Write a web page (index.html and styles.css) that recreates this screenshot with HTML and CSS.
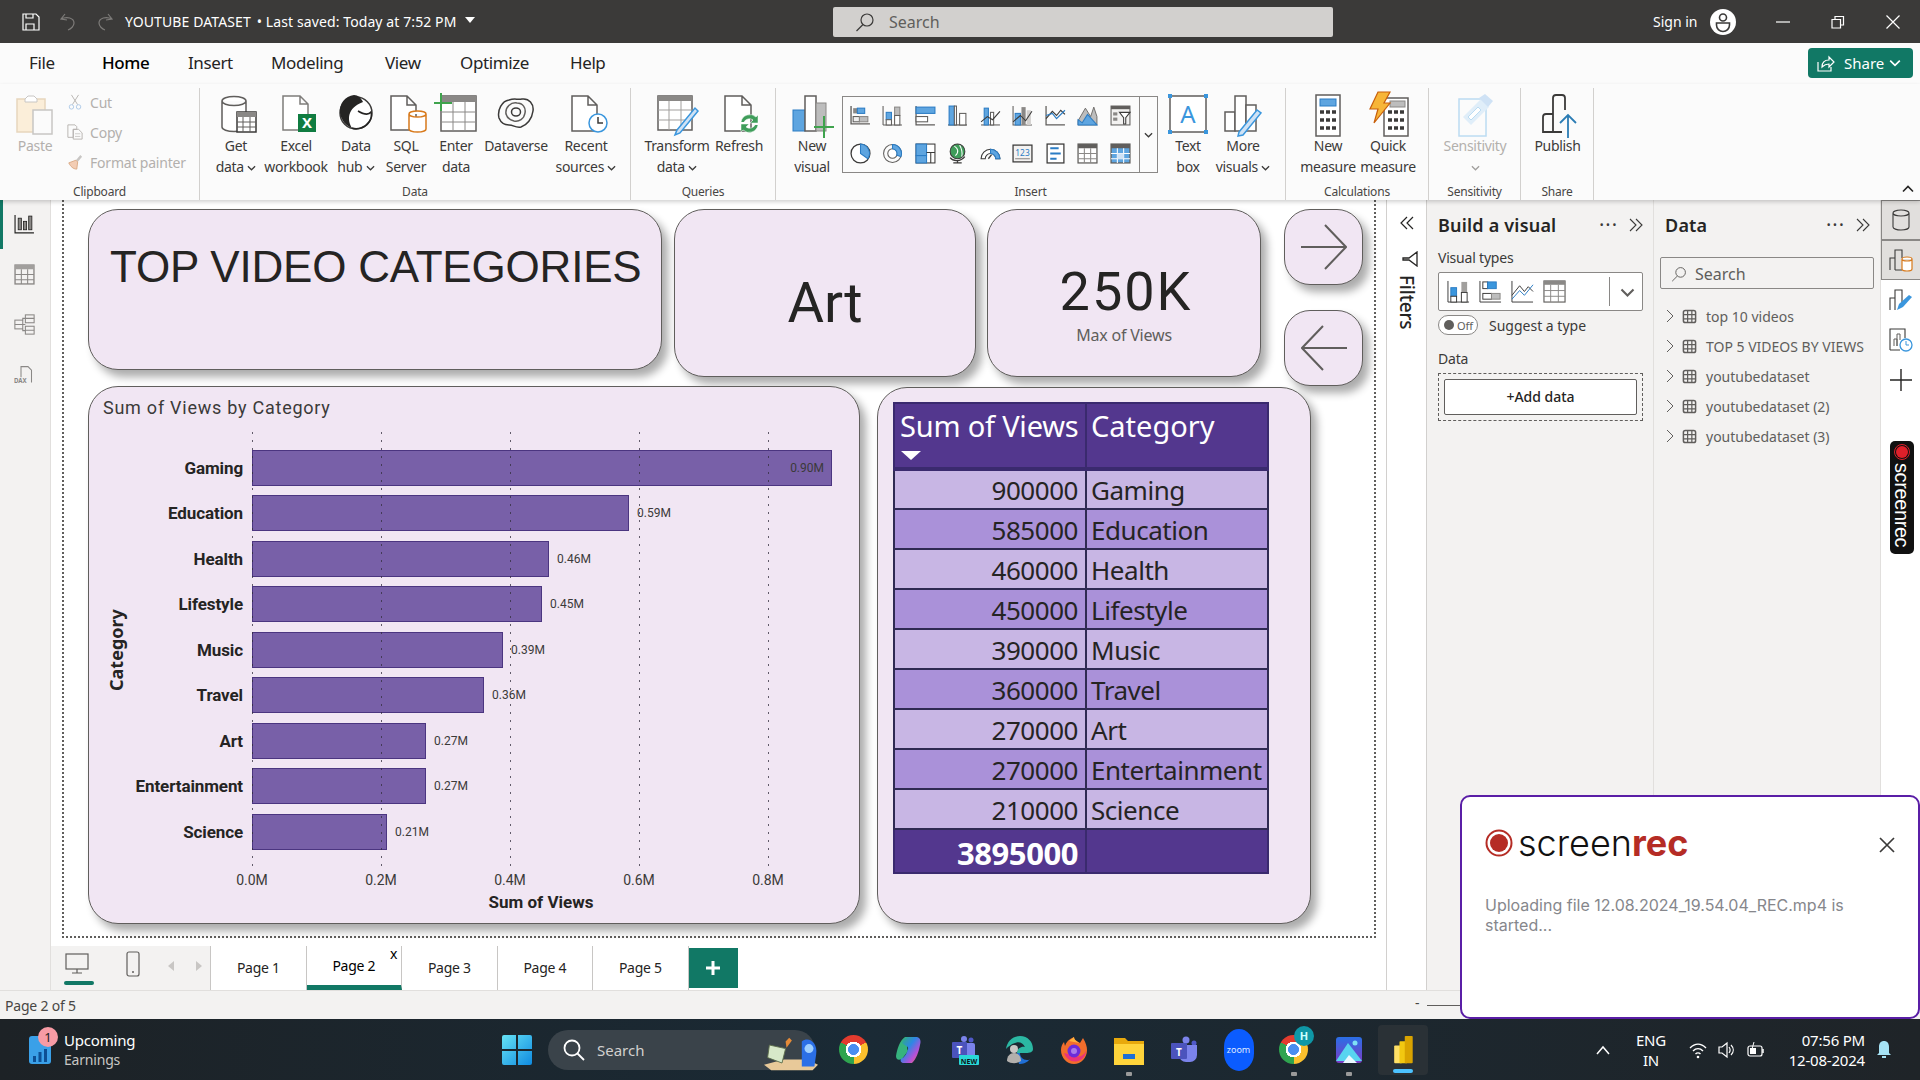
FILE: index.html
```html
<!DOCTYPE html>
<html lang="en">
<head>
<meta charset="utf-8">
<title>YOUTUBE DATASET - Power BI Desktop</title>
<link rel="stylesheet" href="styles.css">
</head>
<body>
<svg class="sprite" aria-hidden="true">
  <symbol id="chev" viewBox="0 0 10 6"><path d="M1 1l4 4 4-4" fill="none" stroke="currentColor" stroke-width="1.4"/></symbol>
  <symbol id="gridtbl" viewBox="0 0 16 16"><rect x="1.5" y="1.5" width="13" height="13" rx="2" fill="none" stroke="#605e5c" stroke-width="1.6"/><path d="M1.5 6h13M1.5 10.500h13M6 1.500v13M10.500 1.500v13" stroke="#605e5c" stroke-width="1.300"/></symbol>
  <symbol id="chevr" viewBox="0 0 8 14"><path d="M1 1l6 6-6 6" fill="none" stroke="#605e5c" stroke-width="1"/></symbol>
  <symbol id="dbl" viewBox="0 0 16 14"><path d="M2 1l6 6-6 6M8 1l6 6-6 6" fill="none" stroke="#3b3a39" stroke-width="1.100"/></symbol>
</svg>

<div class="app">
  <header class="titlebar">
    <div class="tb-left">
      <svg class="ic18" viewBox="0 0 18 18"><path d="M1 1h13l3 3v13H1z M4 17v-6h8v6 M4 1v4h7V1" fill="none" stroke="#fff" stroke-width="1.200"/></svg>
      <svg class="ic18 undo" viewBox="0 0 18 18"><path d="M6 1L2 6l6 1 M2 6c6-3 13-1 13 4 0 3-3 6-6 7" fill="none" stroke="#7d7b79" stroke-width="1.200"/></svg>
      <svg class="ic18 redo" viewBox="0 0 18 18"><path d="M12 1l4 5-6 1 M16 6c-6-3-13-1-13 4 0 3 3 6 6 7" fill="none" stroke="#7d7b79" stroke-width="1.200"/></svg>
      <span class="doc">YOUTUBE DATASET</span><span class="saved">• Last saved: Today at 7:52 PM</span><span class="caret"></span>
    </div>
    <div class="tb-search">
      <svg class="ic20" viewBox="0 0 20 20"><circle cx="12" cy="8" r="6" fill="none" stroke="#3b3a39" stroke-width="1.200"/><path d="M8 12.500L1.500 19" stroke="#3b3a39" stroke-width="1.200"/></svg>
      <span>Search</span>
    </div>
    <div class="tb-right">
      <span class="signin">Sign in</span>
      <svg class="avatar" viewBox="0 0 26 26"><circle cx="13" cy="13" r="13" fill="#fff"/><circle cx="13" cy="8.500" r="3.500" fill="none" stroke="#3b3a39" stroke-width="1.600"/><path d="M6.500 14h13v2a6 6 0 0 1-13 0z" fill="none" stroke="#3b3a39" stroke-width="1.600"/></svg>
      <svg class="winbtn" viewBox="0 0 14 14"><path d="M0 7h14" stroke="#fff" stroke-width="1.200"/></svg>
      <svg class="winbtn" viewBox="0 0 14 14"><path d="M1 4.500h8.500v8.500H1z M4 4V1.500h8.500V10H10" fill="none" stroke="#fff" stroke-width="1.200"/></svg>
      <svg class="winbtn" viewBox="0 0 14 14"><path d="M0.500 0.500l13 13M13.500 0.500l-13 13" stroke="#fff" stroke-width="1.200"/></svg>
    </div>
  </header>

  <nav class="menubar">
    <span class="m-file">File</span><span class="m-home">Home</span><span class="m-insert">Insert</span><span class="m-model">Modeling</span><span class="m-view">View</span><span class="m-opt">Optimize</span><span class="m-help">Help</span>
    <button class="share">
      <svg class="ic18" viewBox="0 0 18 18"><path d="M1 8v9h13v-4" fill="none" stroke="#fff" stroke-width="1.200"/><path d="M5 13c0-5 3-7 7-7V3l5 5-5 5v-3c-3 0-5 1-7 3z" fill="none" stroke="#fff" stroke-width="1.200"/></svg>
      <span>Share</span>
      <svg class="sh-chev"><use href="#chev"/></svg>
    </button>
  </nav>

  <section class="ribbon">
    <div class="group g-clip">
      <div class="g-body">
        <div class="rbtn w70 dis">
          <svg class="ric" viewBox="0 0 48 44"><rect x="6" y="7" width="28" height="33" fill="#fbeed9" stroke="#e7d6bd" stroke-width="1.500"/><path d="M14 7l3-3h6l3 3v3H14z" fill="#fff" stroke="#c8c6c4"/><rect x="22" y="18" width="19" height="24" fill="#fbfbfb" stroke="#c8c6c4" stroke-width="1.500"/></svg>
          <span class="lbl">Paste</span>
        </div>
        <div class="smalls">
          <div class="small"><svg class="ic16" viewBox="0 0 16 18"><path d="M4 1l7 11M12 1L5 12" stroke="#b3b0ad" fill="none"/><circle cx="4" cy="14.500" r="2.500" fill="none" stroke="#a9c7e6"/><circle cx="12" cy="14.500" r="2.500" fill="none" stroke="#a9c7e6"/></svg><span>Cut</span></div>
          <div class="small"><svg class="ic16" viewBox="0 0 18 18"><path d="M1 1h8l2 2v3H7v9H1z M7 6h6l4 4v7H7z" fill="none" stroke="#b3b0ad"/><path d="M9 11h6M9 14h6" stroke="#c8c6c4"/></svg><span>Copy</span></div>
          <div class="small"><svg class="ic16" viewBox="0 0 18 18"><path d="M10 7l5-6 2 2-5 6z" fill="#c8c6c4"/><path d="M2 10l8-3 2 2-1 8c-4 0-7-3-9-7z" fill="#f3cdb4" stroke="#d7a680"/></svg><span>Format painter</span></div>
        </div>
      </div>
      <div class="g-name">Clipboard</div>
    </div>

    <div class="group g-data">
      <div class="g-body">
        <div class="rbtn w60">
          <svg class="ric" viewBox="0 0 48 44"><path d="M10 9a12 4.500 0 0 1 24 0v26a12 4.500 0 0 1-24 0z M10 9a12 4.500 0 0 0 24 0" fill="#fff" stroke="#605e5c" stroke-width="1.500"/><rect x="25" y="20" width="19" height="20" fill="#fff" stroke="#3b3a39" stroke-width="1.500"/><rect x="25" y="20" width="19" height="5" fill="#8a8886"/><path d="M31 25v15M38 25v15M25 30h19M25 35h19" stroke="#605e5c"/></svg>
          <span class="lbl">Get<br>data <svg class="lchev"><use href="#chev"/></svg></span>
        </div>
        <div class="rbtn w60">
          <svg class="ric" viewBox="0 0 48 44"><path d="M11 4h17l8 8v26H11z M28 4v8h8" fill="#fff" stroke="#7f7d7b" stroke-width="1.500"/><rect x="26" y="22" width="18" height="18" fill="#107c41"/><text x="35" y="36" class="xl">X</text></svg>
          <span class="lbl">Excel<br>workbook</span>
        </div>
        <div class="rbtn w60">
          <svg class="ric" viewBox="0 0 48 44"><circle cx="24" cy="21" r="16" fill="#fff" stroke="#3b3a39" stroke-width="1.500"/><path d="M22 3c-9 1-15 9-14 18 1 7 6 13 12 15-5-8-5-20 11-26-2-4-5-7-9-7z" fill="#252423"/><path d="M20 36c5 2 13 0 17-6 2-3 3-7 2-10-3 4-8 2-13-1" fill="none" stroke="#252423" stroke-width="1.500"/></svg>
          <span class="lbl">Data<br>hub <svg class="lchev"><use href="#chev"/></svg></span>
        </div>
        <div class="rbtn w40">
          <svg class="ric" viewBox="0 0 48 44"><path d="M9 4h16l9 9v25H9z M25 4v9h9" fill="#fff" stroke="#605e5c" stroke-width="1.500"/><path d="M27 22a8.500 3 0 0 1 17 0v15a8.500 3 0 0 1-17 0z M27 22a8.500 3 0 0 0 17 0" fill="#fff" stroke="#d87a1c" stroke-width="1.500"/></svg>
          <span class="lbl">SQL<br>Server</span>
        </div>
        <div class="rbtn w60">
          <svg class="ric" viewBox="0 0 48 44"><rect x="9" y="4" width="35" height="35" fill="#fff" stroke="#605e5c" stroke-width="1.500"/><rect x="9" y="4" width="35" height="6" fill="#8a8886"/><path d="M21 10v29M33 10v29M9 20h35M9 30h35" stroke="#8a8886"/><path d="M9 1v18M2 11h18" stroke="#3fa34d" stroke-width="2"/></svg>
          <span class="lbl">Enter<br>data</span>
        </div>
        <div class="rbtn w60">
          <svg class="ric" viewBox="0 0 48 44"><path d="M7 26c-2-8 3-17 10-18 6-2 8 0 13-1 7-1 12 5 11 12-1 8-6 14-12 16-6 1-7-2-12-2-4 0-8-2-10-7z" fill="none" stroke="#3b3a39" stroke-width="1.500"/><path d="M14 22c-1-7 5-12 11-11 6 0 9 5 8 10-1 6-6 9-11 8-4-1-7-3-8-7z" fill="none" stroke="#605e5c" stroke-width="1.500"/><ellipse cx="24" cy="20" rx="4.500" ry="4" fill="none" stroke="#3b3a39" stroke-width="1.500"/></svg>
          <span class="lbl">Dataverse</span>
        </div>
        <div class="rbtn w80">
          <svg class="ric" viewBox="0 0 48 44"><path d="M10 4h16l9 9v26H10z M26 4v9h9" fill="#fff" stroke="#605e5c" stroke-width="1.500"/><circle cx="36" cy="31" r="9" fill="#fff" stroke="#3a96dd" stroke-width="1.500"/><path d="M36 25v6h5" fill="none" stroke="#3b3a39" stroke-width="1.500"/></svg>
          <span class="lbl">Recent<br>sources <svg class="lchev"><use href="#chev"/></svg></span>
        </div>
      </div>
      <div class="g-name">Data</div>
    </div>

    <div class="group g-query">
      <div class="g-body">
        <div class="rbtn w60">
          <svg class="ric" viewBox="0 0 48 44"><rect x="5" y="4" width="34" height="34" fill="#fff" stroke="#605e5c" stroke-width="1.500"/><rect x="5" y="4" width="34" height="5" fill="#8a8886"/><path d="M16 9v29M28 9v29M5 18h34M5 28h34" stroke="#a19f9d"/><path d="M24 38l18-22 3 3-18 22-5 2z" fill="#cfe2f5" stroke="#3a96dd" stroke-width="1.500"/></svg>
          <span class="lbl">Transform<br>data <svg class="lchev"><use href="#chev"/></svg></span>
        </div>
        <div class="rbtn w64">
          <svg class="ric" viewBox="0 0 48 44"><path d="M10 4h17l9 9v26H10z M27 4v9h9" fill="#fff" stroke="#605e5c" stroke-width="1.500"/><path d="M26 30a9 9 0 0 1 15-5l2-2v8h-8l3-3a6 6 0 0 0-9 2 M43 33a9 9 0 0 1-15 5l-2 2v-8h8l-3 3a6 6 0 0 0 9-2" fill="#3f9d5a" stroke="#fff" stroke-width=".5"/></svg>
          <span class="lbl">Refresh</span>
        </div>
      </div>
      <div class="g-name">Queries</div>
    </div>

    <div class="group g-insert">
      <div class="g-body">
        <div class="rbtn w60">
          <svg class="ric" viewBox="0 0 48 44"><rect x="5" y="18" width="12" height="21" fill="#5ea5e0" stroke="#2b7cc4"/><rect x="17" y="4" width="11" height="35" fill="#fff" stroke="#605e5c" stroke-width="1.500"/><rect x="28" y="11" width="10" height="28" fill="#bdbdbd" stroke="#8a8886"/><path d="M36 24v22M26 35h20" stroke="#3fa34d" stroke-width="2"/></svg>
          <span class="lbl">New<br>visual</span>
        </div>
        <div class="gallery">
          <div class="g-grid">
            <svg class="gi" viewBox="0 0 20 20"><path d="M1 1v17h18" fill="none" stroke="#605e5c" stroke-width="1.300"/><rect x="3" y="3" width="4" height="5" fill="#8a8886"/><rect x="7" y="3" width="7" height="5" fill="#5ea5e0" stroke="#2b7cc4"/><rect x="3" y="11" width="6" height="5" fill="#eee" stroke="#605e5c"/><rect x="9" y="11" width="8" height="5" fill="#bdbdbd" stroke="#8a8886"/></svg>
            <svg class="gi" viewBox="0 0 20 20"><path d="M1 19h18M1 1v18" fill="none" stroke="#605e5c" stroke-width="1"/><rect x="4" y="7" width="5" height="7" fill="#5ea5e0" stroke="#2b7cc4"/><rect x="4" y="14" width="5" height="5" fill="#fff" stroke="#605e5c"/><rect x="12" y="2" width="5" height="8" fill="#bdbdbd" stroke="#8a8886"/><rect x="12" y="10" width="5" height="9" fill="#fff" stroke="#605e5c"/></svg>
            <svg class="gi" viewBox="0 0 20 20"><path d="M1 1v18h18" fill="none" stroke="#605e5c" stroke-width="1.200"/><rect x="1" y="2" width="18" height="6" fill="#5ea5e0" stroke="#2b7cc4"/><rect x="1" y="11" width="11" height="5" fill="#fff" stroke="#605e5c"/></svg>
            <svg class="gi" viewBox="0 0 20 20"><path d="M1 19h18" stroke="#605e5c" stroke-width="1.200"/><rect x="2" y="1" width="5" height="18" fill="#5ea5e0" stroke="#2b7cc4"/><rect x="7" y="1" width="2" height="18" fill="#fff" stroke="#605e5c"/><rect x="12" y="8" width="6" height="11" fill="#fff" stroke="#605e5c"/></svg>
            <svg class="gi" viewBox="0 0 20 20"><path d="M1 19h18" stroke="#605e5c"/><rect x="4" y="3" width="4" height="16" fill="#5ea5e0" stroke="#2b7cc4"/><rect x="10" y="7" width="3" height="12" fill="#fff" stroke="#605e5c"/><path d="M1 16l6-5 5 3 7-8" fill="none" stroke="#3b3a39"/></svg>
            <svg class="gi" viewBox="0 0 20 20"><path d="M1 1v18h18" fill="none" stroke="#605e5c"/><rect x="3" y="8" width="5" height="11" fill="#5ea5e0" stroke="#2b7cc4"/><rect x="9" y="2" width="4" height="17" fill="#8a8886"/><rect x="14" y="5" width="4" height="14" fill="#d2d0ce"/><path d="M1 16l7-6 5 5 6-9" fill="none" stroke="#3b3a39"/></svg>
            <svg class="gi" viewBox="0 0 20 20"><path d="M1 1v18h18" fill="none" stroke="#605e5c" stroke-width="1.200"/><path d="M1 13l6-7 4 4 4-5 4 4" fill="none" stroke="#3b3a39" stroke-width="1.100"/><path d="M1 10l6-2 4 5 8-8" fill="none" stroke="#2b7cc4" stroke-width="1.100"/></svg>
            <svg class="gi" viewBox="0 0 20 20"><path d="M8 3l5 8 3-9 3 9v8H1v-4z" fill="#bdbdbd" stroke="#605e5c" stroke-width=".8"/><path d="M1 14l4 3 5-8 9 10H1z" fill="#5ea5e0" stroke="#2b7cc4"/></svg>
            <svg class="gi" viewBox="0 0 20 20"><rect x="1" y="1" width="18" height="18" fill="#f3f2f1" stroke="#605e5c"/><rect x="1" y="1" width="18" height="3" fill="#605e5c"/><rect x="3" y="7" width="4" height="3" fill="#8a8886"/><rect x="3" y="12" width="4" height="3" fill="#8a8886"/><path d="M9 7h10l-4 5v6h-2v-6z" fill="#fff" stroke="#3b3a39"/></svg>

            <svg class="gi" viewBox="0 0 20 20"><circle cx="10" cy="10" r="9" fill="#fff" stroke="#3b3a39" stroke-width="1.200"/><path d="M10 10V1a9 9 0 0 1 7 14z" fill="#5ea5e0" stroke="#2b7cc4"/></svg>
            <svg class="gi" viewBox="0 0 20 20"><circle cx="10" cy="10" r="8.500" fill="none" stroke="#605e5c" stroke-width="1"/><circle cx="10" cy="10" r="4.500" fill="#fff" stroke="#605e5c" stroke-width="1"/><path d="M10 1.500a8.500 8.500 0 0 1 8 11.500l-4-1.500a4.500 4.500 0 0 0-4-6z" fill="#5ea5e0" stroke="#2b7cc4"/></svg>
            <svg class="gi" viewBox="0 0 20 20"><rect x="1" y="1" width="18" height="18" fill="#fff" stroke="#3b3a39"/><rect x="1" y="1" width="10" height="11" fill="#5ea5e0" stroke="#2b7cc4"/><rect x="1" y="12" width="10" height="7" fill="#5ea5e0" stroke="#2b7cc4"/><path d="M11 9h8M15 9v10" stroke="#3b3a39"/></svg>
            <svg class="gi" viewBox="0 0 20 20"><circle cx="10" cy="8" r="7" fill="#3f9d5a" stroke="#3b3a39"/><path d="M7 3c3 2 5 5 1 9M12 2c2 3 3 8 2 11" fill="none" stroke="#fff"/><path d="M3 14c3 4 10 4 14-1M10 17v2M6 19h8" fill="none" stroke="#3b3a39" stroke-width="1.200"/></svg>
            <svg class="gi" viewBox="0 0 20 20"><path d="M1 15a9 9 0 0 1 18 0h-4a5 5 0 0 0-10 0z" fill="#fff" stroke="#3b3a39"/><path d="M10 6a9 9 0 0 1 9 9h-4a5 5 0 0 0-5-5z" fill="#5ea5e0" stroke="#2b7cc4"/><path d="M8 15l3-4" stroke="#3b3a39" stroke-width="1.200"/></svg>
            <svg class="gi" viewBox="0 0 20 20"><rect x="1" y="2" width="18" height="16" fill="#f3f2f1" stroke="#3b3a39" stroke-width="1.200"/><text x="10" y="12" class="t123">123</text><path d="M3 15h14" stroke="#8a8886"/></svg>
            <svg class="gi" viewBox="0 0 20 20"><rect x="2" y="1" width="16" height="18" fill="#fff" stroke="#3b3a39" stroke-width="1.200"/><path d="M5 5h8M5 10h10M5 15h6" stroke="#2b7cc4" stroke-width="2"/></svg>
            <svg class="gi" viewBox="0 0 20 20"><rect x="1" y="1" width="18" height="18" fill="#fff" stroke="#605e5c" stroke-width="1.200"/><rect x="1" y="1" width="18" height="4" fill="#605e5c"/><path d="M7 5v14M13 5v14M1 10h18M1 15h18" stroke="#8a8886"/></svg>
            <svg class="gi" viewBox="0 0 20 20"><rect x="1" y="1" width="18" height="18" fill="#5ea5e0" stroke="#605e5c" stroke-width="1.200"/><rect x="1" y="1" width="18" height="4" fill="#605e5c"/><path d="M7 5v14M13 5v14M1 10h18M1 15h18" stroke="#fff"/><rect x="7" y="10" width="6" height="5" fill="#cfe2f5"/></svg>
          </div>
          <div class="g-more"><svg class="lchev"><use href="#chev"/></svg></div>
        </div>
        <div class="rbtn w60">
          <svg class="ric" viewBox="0 0 48 44"><rect x="6" y="4" width="36" height="36" fill="#fff" stroke="#605e5c" stroke-width="1.500"/><text x="24" y="31" class="ta">A</text><path d="M4 2h4v4H4zM40 2h4v4h-4zM4 38h4v4H4zM40 38h4v4h-4z" fill="#3a96dd"/></svg>
          <span class="lbl">Text<br>box</span>
        </div>
        <div class="rbtn w50">
          <svg class="ric" viewBox="0 0 48 44"><rect x="6" y="20" width="10" height="19" fill="#fff" stroke="#605e5c" stroke-width="1.500"/><rect x="16" y="4" width="11" height="35" fill="#fff" stroke="#605e5c" stroke-width="1.500"/><rect x="27" y="13" width="10" height="26" fill="#fff" stroke="#605e5c" stroke-width="1.500"/><path d="M20 40l18-22 4 3-18 22-5 1z" fill="#cfe2f5" stroke="#3a96dd" stroke-width="1.500"/></svg>
          <span class="lbl">More<br>visuals <svg class="lchev"><use href="#chev"/></svg></span>
        </div>
      </div>
      <div class="g-name">Insert</div>
    </div>

    <div class="group g-calc">
      <div class="g-body">
        <div class="rbtn w60">
          <svg class="ric" viewBox="0 0 48 44"><rect x="12" y="3" width="24" height="41" fill="#fff" stroke="#605e5c" stroke-width="1.500"/><rect x="16" y="7" width="16" height="7" fill="#5ea5e0" stroke="#2b7cc4"/><path d="M16 20h4M22 20h4M28 20h4M16 28h4M22 28h4M28 28h4M16 36h4M22 36h4M28 36h4" stroke="#3b3a39" stroke-width="3.500"/></svg>
          <span class="lbl">New<br>measure</span>
        </div>
        <div class="rbtn w60">
          <svg class="ric" viewBox="0 0 48 44"><rect x="20" y="6" width="24" height="38" fill="#fff" stroke="#605e5c" stroke-width="1.500"/><rect x="26" y="9" width="15" height="6" fill="#bdbdbd" stroke="#8a8886"/><path d="M24 20h4M30 20h4M36 20h4M24 28h4M30 28h4M36 28h4M24 36h4M30 36h4M36 36h4" stroke="#3b3a39" stroke-width="3.500"/><path d="M14 0h12l-6 11h6L10 31l4-14H6z" fill="#f7b538" stroke="#c75f0c" stroke-width="1.200"/></svg>
          <span class="lbl">Quick<br>measure</span>
        </div>
      </div>
      <div class="g-name">Calculations</div>
    </div>

    <div class="group g-sens">
      <div class="g-body">
        <div class="rbtn w92 dis">
          <svg class="ric" viewBox="0 0 48 44"><rect x="8" y="7" width="27" height="37" fill="#fbfbfb" stroke="#bcdcf2" stroke-width="1.500"/><path d="M12 25L30 7l8 8-18 18z" fill="#e0eef9"/><path d="M17 25l10-10 3 3-10 10z" fill="#fff" stroke="#bcdcf2"/><path d="M28 6l6-4 8 7-5 6z" fill="#cfe2f5"/></svg>
          <span class="lbl">Sensitivity<br><svg class="lchev"><use href="#chev"/></svg></span>
        </div>
      </div>
      <div class="g-name">Sensitivity</div>
    </div>

    <div class="group g-share">
      <div class="g-body">
        <div class="rbtn w73">
          <svg class="ric" viewBox="0 0 48 44"><path d="M9 40V25a3 3 0 0 1 3-3h7v18zM19 40V6a3 3 0 0 1 3-3h6a3 3 0 0 1 3 3v12M19 40h9" fill="none" stroke="#3b3a39" stroke-width="1.800"/><path d="M34 46V24M26 31l8-8 8 8" fill="none" stroke="#2b7cb4" stroke-width="1.800"/></svg>
          <span class="lbl">Publish</span>
        </div>
      </div>
      <div class="g-name">Share</div>
    </div>
    <svg class="collapse" viewBox="0 0 12 8"><path d="M1 6.500l5-5 5 5" fill="none" stroke="#252423" stroke-width="1.600"/></svg>
  </section>

  <main class="main">
    <aside class="leftnav">
      <div class="nav-ic active"><svg class="ic24" viewBox="0 0 20 20"><path d="M1 1v17h18" fill="none" stroke="#252423" stroke-width="1.100"/><rect x="4" y="4" width="3" height="11" fill="#8a8886" stroke="#252423" stroke-width=".8"/><rect x="9" y="7" width="3" height="8" fill="#8a8886" stroke="#252423" stroke-width=".8"/><rect x="14" y="2" width="3" height="13" fill="#8a8886" stroke="#252423" stroke-width=".8"/></svg></div>
      <div class="nav-ic"><svg class="ic24" viewBox="0 0 20 20"><rect x="1" y="1" width="18" height="18" fill="none" stroke="#8a8886" stroke-width="1.300"/><rect x="1" y="1" width="18" height="4" fill="#a19f9d"/><path d="M7 5v14M13 5v14M1 10h18M1 15h18" stroke="#8a8886"/></svg></div>
      <div class="nav-ic"><svg class="ic24" viewBox="0 0 24 24"><g fill="none" stroke="#8a8886" stroke-width="1.200"><rect x="13" y="1" width="10" height="9"/><rect x="1" y="7" width="9" height="10"/><rect x="13" y="14" width="10" height="9"/><path d="M10 12h3M13 5h-3v2M10 17v2h3M13 5h10M13 18.500h10M1 12h9"/></g></svg></div>
      <div class="nav-ic"><svg class="ic24" viewBox="0 0 24 24"><path d="M8 15V3h8l4 4v14" fill="none" stroke="#8a8886" stroke-width="1.200"/><text x="0" y="22" class="dax">DAX</text></svg></div>
    </aside>

    <div class="center">
      <div class="canvas">
        <div class="report">
          <div class="card c-title"><span>TOP VIDEO CATEGORIES</span></div>
          <div class="card c-art"><span>Art</span></div>
          <div class="card c-kpi"><div class="kpi-v">250K</div><div class="kpi-l">Max of Views</div></div>
          <div class="card c-next"><svg class="arrow" viewBox="0 0 46 46"><path d="M0 23h45M24 1l21 22-21 22" fill="none" stroke="#605e5c" stroke-width="2"/></svg></div>
          <div class="card c-prev"><svg class="arrow" viewBox="0 0 46 46"><path d="M46 23H1M22 1L1 23l21 22" fill="none" stroke="#605e5c" stroke-width="2"/></svg></div>

          <div class="card c-chart">
            <div class="ch-title">Sum of Views by Category</div>
            <div class="ch-ytitle">Category</div>
            <div class="plot">
              <i class="gl gl0"></i><i class="gl gl1"></i><i class="gl gl2"></i><i class="gl gl3"></i><i class="gl gl4"></i>
              <div class="row"><span class="cat">Gaming</span><span class="bar bar-in" style="width:580px"><em>0.90M</em></span></div>
              <div class="row"><span class="cat">Education</span><span class="bar" style="width:377px"></span><em>0.59M</em></div>
              <div class="row"><span class="cat">Health</span><span class="bar" style="width:297px"></span><em>0.46M</em></div>
              <div class="row"><span class="cat">Lifestyle</span><span class="bar" style="width:290px"></span><em>0.45M</em></div>
              <div class="row"><span class="cat">Music</span><span class="bar" style="width:251px"></span><em>0.39M</em></div>
              <div class="row"><span class="cat">Travel</span><span class="bar" style="width:232px"></span><em>0.36M</em></div>
              <div class="row"><span class="cat">Art</span><span class="bar" style="width:174px"></span><em>0.27M</em></div>
              <div class="row"><span class="cat">Entertainment</span><span class="bar" style="width:174px"></span><em>0.27M</em></div>
              <div class="row"><span class="cat">Science</span><span class="bar" style="width:135px"></span><em>0.21M</em></div>
            </div>
            <div class="ticks"><span>0.0M</span><span>0.2M</span><span>0.4M</span><span>0.6M</span><span>0.8M</span></div>
            <div class="ch-xtitle">Sum of Views</div>
          </div>

          <div class="card c-table">
            <table class="tbl">
              <thead><tr><th class="th1">Sum of Views<i class="sort"></i></th><th>Category</th></tr></thead>
              <tbody>
                <tr><td>900000</td><td>Gaming</td></tr>
                <tr><td>585000</td><td>Education</td></tr>
                <tr><td>460000</td><td>Health</td></tr>
                <tr><td>450000</td><td>Lifestyle</td></tr>
                <tr><td>390000</td><td>Music</td></tr>
                <tr><td>360000</td><td>Travel</td></tr>
                <tr><td>270000</td><td>Art</td></tr>
                <tr><td>270000</td><td>Entertainment</td></tr>
                <tr><td>210000</td><td>Science</td></tr>
              </tbody>
              <tfoot><tr><td>3895000</td><td></td></tr></tfoot>
            </table>
          </div>
        </div>
      </div>
      <div class="tabs">
        <div class="tab-tools">
          <div class="dev dev-on"><svg class="ic24" viewBox="0 0 24 24"><rect x="1" y="2" width="22" height="15" fill="none" stroke="#605e5c" stroke-width="1.200"/><path d="M12 17v4M7 21h10" stroke="#605e5c" stroke-width="1.200"/></svg></div>
          <svg class="phone" viewBox="0 0 14 26"><rect x="1" y="1" width="12" height="24" rx="2" fill="none" stroke="#605e5c" stroke-width="1.200"/><circle cx="7" cy="21" r="1" fill="#605e5c"/></svg>
          <svg class="tri" viewBox="0 0 6 10"><path d="M6 0v10L0 5z" fill="#c8c6c4"/></svg>
          <svg class="tri tri2" viewBox="0 0 6 10"><path d="M0 0v10l6-5z" fill="#c8c6c4"/></svg>
        </div>
        <div class="tab">Page 1</div>
        <div class="tab on">Page 2<b>x</b></div>
        <div class="tab">Page 3</div>
        <div class="tab">Page 4</div>
        <div class="tab">Page 5</div>
        <div class="addtab"><svg class="plus" viewBox="0 0 14 14"><path d="M7 0v14M0 7h14" stroke="#fff" stroke-width="3"/></svg></div>
      </div>
    </div>

    <aside class="filters">
      <svg class="dblback" viewBox="0 0 16 14"><path d="M8 1L2 7l6 6M14 1L8 7l6 6" fill="none" stroke="#252423" stroke-width="1.200"/></svg>
      <svg class="funnel" viewBox="0 0 16 16"><path d="M15 1v14L7 9H1V7h6z" fill="none" stroke="#252423" stroke-width="1.300"/></svg>
      <span class="f-txt">Filters</span>
    </aside>

    <aside class="pane p-build">
      <div class="p-head"><h2>Build a visual</h2><span class="dots">···</span><svg class="dbl"><use href="#dbl"/></svg></div>
      <div class="p-lbl p-lbl1">Visual types</div>
      <div class="vt">
        <svg class="vti" viewBox="0 0 24 24"><path d="M1 1v22h22" fill="none" stroke="#3b3a39"/><rect x="4" y="8" width="6" height="9" fill="#3a96dd" stroke="#2b7cc4"/><rect x="4" y="17" width="6" height="6" fill="#fff" stroke="#3b3a39"/><rect x="15" y="2" width="6" height="11" fill="#a19f9d"/><rect x="15" y="13" width="6" height="10" fill="#fff" stroke="#3b3a39"/></svg>
        <svg class="vti" viewBox="0 0 24 24"><path d="M1 1v22h22" fill="none" stroke="#3b3a39"/><rect x="4" y="2" width="5" height="7" fill="#fff" stroke="#3b3a39"/><rect x="9" y="2" width="9" height="7" fill="#3a96dd" stroke="#2b7cc4"/><rect x="4" y="14" width="9" height="6" fill="#fff" stroke="#3b3a39"/><rect x="13" y="14" width="9" height="6" fill="#bdbdbd" stroke="#8a8886"/></svg>
        <svg class="vti" viewBox="0 0 24 24"><path d="M1 1v22h22" fill="none" stroke="#3b3a39"/><path d="M1 16l8-10 5 6 4-5 5 5" fill="none" stroke="#3b3a39"/><path d="M1 20l8-9 5 5 9-11" fill="none" stroke="#2b7cc4"/></svg>
        <svg class="vti" viewBox="0 0 24 24"><rect x="1" y="1" width="22" height="22" fill="#fff" stroke="#605e5c" stroke-width="1.200"/><rect x="1" y="1" width="22" height="4" fill="#8a8886"/><path d="M8 5v18M16 5v18M1 11h22M1 17h22" stroke="#8a8886"/></svg>
        <i class="vt-sep"></i>
        <svg class="vt-chev"><use href="#chev"/></svg>
      </div>
      <div class="sugg"><span class="toggle"><i></i>Off</span><span>Suggest a type</span></div>
      <div class="p-lbl p-lbl2">Data</div>
      <div class="adddash"><div class="addbtn">+Add data</div></div>
    </aside>

    <aside class="pane p-data">
      <div class="p-head"><h2>Data</h2><span class="dots">···</span><svg class="dbl"><use href="#dbl"/></svg></div>
      <div class="dsearch"><svg class="ic16" viewBox="0 0 20 20"><circle cx="12" cy="8" r="6" fill="none" stroke="#605e5c" stroke-width="1.200"/><path d="M8 12.500L1.500 19" stroke="#605e5c" stroke-width="1.200"/></svg><span>Search</span></div>
      <ul class="tree">
        <li><svg class="tc"><use href="#chevr"/></svg><svg class="ti"><use href="#gridtbl"/></svg><span>top 10 videos</span></li>
        <li><svg class="tc"><use href="#chevr"/></svg><svg class="ti"><use href="#gridtbl"/></svg><span>TOP 5 VIDEOS BY VIEWS</span></li>
        <li><svg class="tc"><use href="#chevr"/></svg><svg class="ti"><use href="#gridtbl"/></svg><span>youtubedataset</span></li>
        <li><svg class="tc"><use href="#chevr"/></svg><svg class="ti"><use href="#gridtbl"/></svg><span>youtubedataset (2)</span></li>
        <li><svg class="tc"><use href="#chevr"/></svg><svg class="ti"><use href="#gridtbl"/></svg><span>youtubedataset (3)</span></li>
      </ul>
    </aside>

    <aside class="rail">
      <div class="r-btn r-sel"><svg class="ic24" viewBox="0 0 24 24"><path d="M4 5a8 3 0 0 1 16 0v14a8 3 0 0 1-16 0z M4 5a8 3 0 0 0 16 0" fill="none" stroke="#3b3a39" stroke-width="1.100"/></svg></div>
      <div class="r-btn r-sel"><svg class="ic24" viewBox="0 0 24 24"><path d="M1 22V10h5v12M6 22V2h7v8M6 22h7" fill="none" stroke="#3b3a39" stroke-width="1.100"/><path d="M13 11a5 2 0 0 1 10 0v10a5 2 0 0 1-10 0z M13 11a5 2 0 0 0 10 0" fill="#fff" stroke="#d87a1c" stroke-width="1.200"/></svg></div>
      <div class="r-btn"><svg class="ic24" viewBox="0 0 24 24"><path d="M1 22V10h5v12M6 18V2h7v12" fill="none" stroke="#3b3a39" stroke-width="1.100"/><path d="M8 22l2-6 10-9 3 2-9 10z" fill="#3a96dd"/></svg></div>
      <div class="r-btn"><svg class="ic24" viewBox="0 0 24 24"><path d="M1 22V1h15v9 M1 22h10" fill="none" stroke="#3b3a39" stroke-width="1.100"/><path d="M5 18v-7h3v7M8 18V6h3v6" fill="none" stroke="#605e5c"/><circle cx="17" cy="17" r="6" fill="#fff" stroke="#3a96dd" stroke-width="1.300"/><path d="M17 13v4h3" fill="none" stroke="#3a96dd"/></svg></div>
      <div class="r-btn"><svg class="ic24" viewBox="0 0 24 24"><path d="M12 1v22M1 12h22" stroke="#252423" stroke-width="1.400"/></svg></div>
      <div class="srec"><i class="srec-dot"></i><span>screenrec</span></div>
    </aside>
  </main>

  <div class="status"><span>Page 2 of 5</span></div>

  <footer class="taskbar">
    <div class="earn">
      <span class="earn-ic"><svg class="earn-bars" viewBox="0 0 16 14"><path d="M1 14V8h3v6zM6.500 14V4h3v10zM12 14V1h3v13z" fill="#0d4f94"/></svg><b class="badge">1</b></span>
      <div class="earn-t"><div>Upcoming</div><div class="earn-s">Earnings</div></div>
    </div>
    <svg class="start" viewBox="0 0 30 30"><defs><linearGradient id="wg" x1="0" y1="0" x2="1" y2="1"><stop offset="0" stop-color="#66e3f5"/><stop offset="1" stop-color="#0f8ae0"/></linearGradient></defs><path d="M0 2a2 2 0 0 1 2-2h12v14H0zM16 0h12a2 2 0 0 1 2 2v12H16zM0 16h14v14H2a2 2 0 0 1-2-2zM16 16h14v12a2 2 0 0 1-2 2H16z" fill="url(#wg)"/></svg>
    <div class="tsearch">
      <svg class="ic22" viewBox="0 0 22 22"><circle cx="9" cy="9" r="7.500" fill="none" stroke="#fff" stroke-width="1.800"/><path d="M14.500 14.500L21 21" stroke="#fff" stroke-width="1.800"/></svg>
      <span>Search</span>
      <svg class="ts-art" viewBox="0 0 64 40"><path d="M2 32l22-6h26l12 6-6 6H10z" fill="#e8c999"/><path d="M8 10l18 4-4 16-16-6z" fill="#d7e8c9" stroke="#5a6b4a"/><path d="M26 6l4-4 3 3-6 8z" fill="#e58b38"/><path d="M44 6c8-6 18 2 16 14l-2 14H44z" fill="#2b6fe6"/><circle cx="52" cy="14" r="5" fill="#9fd0ff"/></svg>
    </div>
    <div class="apps">
      <span class="app-i"><i class="chrome"></i></span>
      <span class="app-i"><svg class="ai" viewBox="0 0 30 30"><defs><linearGradient id="cp" x1="0" y1="0" x2="1" y2="1"><stop offset="0" stop-color="#2fb56b"/><stop offset=".4" stop-color="#2f86e6"/><stop offset=".7" stop-color="#b750d8"/><stop offset="1" stop-color="#f47a3c"/></linearGradient></defs><path d="M11 2h8c-5 4-7 10-5 14l-6 8c-4 2-6 0-6-3C3 14 6 5 11 2z" fill="#36b37e"/><path d="M8 8c1-4 3-6 6-6h9c4 1 4 5 3 8-1 6-4 15-8 18h-8c-3 0-4-2-3-4 4-2 6-6 7-10 1-3-3-3-6-6z" fill="url(#cp)"/></svg></span>
      <span class="app-i"><svg class="ai" viewBox="0 0 30 30"><circle cx="15" cy="4" r="3" fill="#7b83eb"/><circle cx="22" cy="5" r="2.500" fill="#5059c9"/><rect x="8" y="8" width="18" height="14" rx="2" fill="#7b83eb"/><rect x="3" y="7" width="15" height="16" rx="1" fill="#4b53bc"/><text x="10.500" y="19" class="tt">T</text><rect x="10" y="20" width="20" height="10" rx="1" fill="#29d8d8"/><text x="20" y="28.500" class="tnew">NEW</text></svg></span>
      <span class="app-i"><svg class="ai" viewBox="0 0 30 30"><path d="M2 14C3 6 9 1 16 1c8 0 13 6 13 13 0 3-3 4-7 4h-9c0-5 5-7 8-6-2-4-6-6-10-4-4 1-7 4-9 6z" fill="#2bb8a3"/><path d="M16 18c0 4 3 7 7 7 1 0 2 0 3-1-3 4-7 5-11 5l-2-11z" fill="#1f6fd6"/><circle cx="10" cy="14" r="4" fill="#c8c6c4"/><path d="M3 26c0-5 3-8 7-8s7 3 7 8c-4 3-10 3-14 0z" fill="#b3b0ad"/></svg></span>
      <span class="app-i"><svg class="ai" viewBox="0 0 30 30"><path d="M15 2c0 3 3 4 6 6l3-5c3 5 4 9 4 12 0 8-6 14-13 14S2 23 2 15c0-3 1-6 3-8l1 4c1-4 4-7 9-9z" fill="#f26d2c"/><path d="M5 18c2 6 8 10 14 8 4-1 8-5 8-10-3 6-8 6-10 5z" fill="#e9337b"/><circle cx="15" cy="16" r="6.500" fill="#6c2bd9"/><circle cx="15" cy="16" r="3" fill="#a87be8"/><path d="M10 6c2-2 4-3 5-4 0 3 3 4 5 6-3-1-7-1-10-2z" fill="#ffb13b"/></svg></span>
      <span class="app-i app-dot"><svg class="ai" viewBox="0 0 30 30"><path d="M0 3h11l3 3h16v6H0z" fill="#e8a90c"/><rect x="0" y="9" width="30" height="21" fill="#ffd43b"/><rect x="9" y="19" width="12" height="5" fill="#1f6fd6"/></svg></span>
      <span class="app-i"><svg class="ai" viewBox="0 0 30 30"><circle cx="17" cy="5" r="3.500" fill="#7b83eb"/><circle cx="25" cy="8" r="2.500" fill="#5059c9"/><path d="M10 10h18v10a7 7 0 0 1-7 7h-4a7 7 0 0 1-7-7z" fill="#7b83eb"/><rect x="2" y="8" width="16" height="16" rx="1" fill="#4b53bc"/><text x="10" y="21" class="tt">T</text></svg></span>
      <span class="app-i"><span class="zoomi">zoom</span></span>
      <span class="app-i app-dot"><i class="chrome"></i><b class="hbadge">H</b></span>
      <span class="app-i app-dot"><svg class="ai" viewBox="0 0 30 30"><defs><linearGradient id="ph" x1="0" y1="0" x2="0" y2="1"><stop offset="0" stop-color="#2a6fe6"/><stop offset="1" stop-color="#7c3bc4"/></linearGradient></defs><rect x="2" y="2" width="26" height="26" rx="3" fill="url(#ph)"/><circle cx="21" cy="8" r="2.500" fill="#7fe0f5"/><path d="M2 26l12-18 14 18z" fill="#58d4f0"/><path d="M9 28l6-8 8 8z" fill="#eaf9ff"/></svg></span>
      <span class="app-i app-on"><svg class="ai" viewBox="0 0 30 34"><rect x="5" y="12" width="9" height="20" rx="1" fill="#ffe066"/><rect x="11" y="7" width="9" height="25" rx="1" fill="#f2c811"/><rect x="17" y="1" width="9" height="31" rx="1" fill="#d9a300"/></svg><i class="app-line"></i></span>
    </div>
    <div class="tray">
      <svg class="ic14" viewBox="0 0 14 10"><path d="M1 9l6-7 6 7" fill="none" stroke="#fff" stroke-width="1.500"/></svg>
      <div class="lang"><div>ENG</div><div>IN</div></div>
      <svg class="ic18" viewBox="0 0 18 18"><path d="M1 7c5-5 11-5 16 0M4 10c3-3 7-3 10 0M6.500 13c1.500-1.500 3.500-1.500 5 0" fill="none" stroke="#fff" stroke-width="1.400"/><circle cx="9" cy="16" r="1.300" fill="#fff"/></svg>
      <svg class="ic18" viewBox="0 0 18 18"><path d="M1 6h3l5-4v14l-5-4H1z" fill="none" stroke="#fff" stroke-width="1.200"/><path d="M11 6c1.500 2 1.500 4 0 6M13 4c3 3 3 7 0 10" fill="none" stroke="#fff" stroke-width="1.200"/></svg>
      <svg class="ic18" viewBox="0 0 18 18"><rect x="1" y="5" width="14" height="10" rx="2" fill="none" stroke="#fff" stroke-width="1.200"/><rect x="3" y="7" width="6" height="6" fill="#fff"/><path d="M16 8v4" stroke="#fff" stroke-width="1.500"/><path d="M7 1L5 8h3l-1 5" fill="none" stroke="#fff"/></svg>
      <div class="clock"><div>07:56 PM</div><div>12-08-2024</div></div>
      <svg class="bell" viewBox="0 0 14 18"><path d="M7 0c3 0 5 2 5 6v6l2 2H0l2-2V6c0-4 2-6 5-6z" fill="#a6e3f5"/><path d="M5 15h4v2H5z" fill="#a6e3f5"/></svg>
    </div>
  </footer>

  <div class="zoombar">-</div>
  <div class="toast">
    <div class="t-head">
      <svg class="t-logo" viewBox="0 0 28 28"><circle cx="14" cy="14" r="12.500" fill="#fff" stroke="#b52c25" stroke-width="2"/><circle cx="14" cy="14" r="9" fill="#b52c25"/></svg>
      <span class="t-name">screen<b>rec</b></span>
      <svg class="t-x" viewBox="0 0 16 16"><path d="M1 1l14 14M15 1L1 15" stroke="#3b3a39" stroke-width="1.700"/></svg>
    </div>
    <p class="t-msg">Uploading file 12.08.2024_19.54.04_REC.mp4 is started...</p>
  </div>
</div>
</body>
</html>
```

FILE: styles.css
```css
* { box-sizing: border-box; }
html, body { margin: 0; padding: 0; height: 100%; overflow: hidden; }
body { font-family: "Noto Sans", "Open Sans", sans-serif; color: #252423; background: #fff; }
.sprite { display: none; }
svg { display: block; flex: none; }
.app { position: relative; width: 1920px; height: 1080px; display: flex; flex-direction: column; overflow: hidden; }

.ic14 { width: 14px; height: 10px; }
.ic16 { width: 16px; height: 16px; }
.ic18 { width: 18px; height: 18px; }
.ic20 { width: 20px; height: 20px; }
.ic22 { width: 22px; height: 22px; }
.ic24 { width: 24px; height: 24px; }

/* title bar */
.titlebar { height: 43px; background: #3b3a39; color: #fff; display: flex; align-items: center; flex: none; }
.tb-left { width: 833px; display: flex; align-items: center; padding-left: 22px; font-size: 14px; }
.undo { margin-left: 19px; }
.redo { margin-left: 19px; }
.doc { margin-left: 11px; letter-spacing: .1px; }
.saved { margin-left: 6px; letter-spacing: .1px; }
.caret { margin-left: 9px; margin-bottom: 3px; border: 5px solid transparent; border-top: 6px solid #fff; border-bottom: 0; }
.tb-search { width: 500px; height: 30px; background: #d2d0ce; border-radius: 2px; display: flex; align-items: center; padding-left: 22px; gap: 14px; font-size: 16px; color: #605e5c; }
.tb-right { flex: 1; display: flex; align-items: center; padding-left: 320px; font-size: 14px; }
.signin { width: 46px; white-space: nowrap; }
.avatar { width: 26px; height: 26px; margin-left: 11px; }
.winbtn { width: 14px; height: 14px; margin-left: 41px; }
.avatar + .winbtn { margin-left: 40px; }

/* menu */
.menubar { height: 41px; background: #fbfbfb; position: relative; display: flex; align-items: center; font-size: 17px; flex: none; }
.menubar > span { position: absolute; top: 8px; line-height: 24px; letter-spacing: -0.4px; }
.m-file { left: 29px; }
.m-home { left: 102px; font-weight: 500; color: #000; }
.m-insert { left: 188px; }
.m-model { left: 271px; }
.m-view { left: 385px; }
.m-opt { left: 460px; }
.m-help { left: 570px; }
.share { position: absolute; left: 1808px; top: 5px; width: 105px; height: 30px; background: #117865; border: 0; border-radius: 4px; color: #fff; display: flex; align-items: center; padding: 0 0 0 9px; gap: 9px; font: 15px "Noto Sans", sans-serif; }
.sh-chev { width: 12px; height: 8px; margin-left: -4px; color: #fff; }

/* ribbon */
.ribbon { height: 116px; background: #fbfbfb; display: flex; padding-top: 4px; position: relative; z-index: 3; box-shadow: 0 2px 4px rgba(0,0,0,.18); flex: none; }
.group { height: 112px; border-right: 1px solid #d2d0ce; display: flex; flex-direction: column; }
.g-body { height: 95px; display: flex; flex: none; }
.g-name { height: 17px; line-height: 18px; font-size: 12px; text-align: center; color: #484644; letter-spacing: -0.2px; }
.g-clip { width: 200px; }
.g-data { width: 431px; }
.g-data .g-body { padding-left: 6px; }
.g-query { width: 145px; }
.g-query .g-body { padding-left: 16px; }
.g-insert { width: 510px; }
.g-insert .g-body { padding-left: 6px; }
.g-calc { width: 143px; }
.g-calc .g-body { padding-left: 12px; }
.g-sens { width: 92px; }
.g-share { width: 73px; }
.rbtn { display: flex; flex-direction: column; align-items: center; padding-top: 4px; flex: none; font-size: 14px; }
.w40 { width: 40px; } .w50 { width: 50px; } .w60 { width: 60px; } .w64 { width: 64px; } .w70 { width: 70px; } .w73 { width: 73px; } .w80 { width: 80px; } .w92 { width: 92px; }
.ric { width: 48px; height: 44px; overflow: visible; margin-bottom: -1px; }
.lbl { line-height: 21px; text-align: center; white-space: nowrap; letter-spacing: -0.3px; color: #3b3a39; }
.dis .lbl { color: #b3b0ad; }
.lchev { display: inline-block; width: 9px; height: 6px; vertical-align: 1px; color: #3b3a39; }
.dis .lchev { color: #a19f9d; }
.smalls { display: flex; flex-direction: column; margin: -1px 0 0 -3px; }
.small { height: 30px; display: flex; align-items: center; gap: 7px; font-size: 14px; color: #b3b0ad; letter-spacing: -0.2px; white-space: nowrap; }
.gallery { width: 316px; height: 77px; margin-top: 8px; border: 1px solid #8a8886; display: flex; flex: none; }
.g-grid { width: 296px; display: grid; grid-template-columns: repeat(9, 32.5px); grid-auto-rows: 37.5px; padding-left: 1px; justify-items: center; align-items: center; }
.gi { width: 21px; height: 21px; }
.g-more { flex: 1; border-left: 1px solid #8a8886; display: flex; align-items: center; justify-content: center; }
.xl { font: bold 15px "Noto Sans", sans-serif; fill: #fff; text-anchor: middle; }
.t123 { font: 8px "Noto Sans", sans-serif; fill: #2b7cc4; text-anchor: middle; }
.ta { font: 24px "Noto Sans", sans-serif; fill: #3a96dd; text-anchor: middle; }
.tt { font: bold 10px "Noto Sans", sans-serif; fill: #fff; text-anchor: middle; }
.tnew { font: bold 7px "Noto Sans", sans-serif; fill: #111; text-anchor: middle; }
.collapse { position: absolute; left: 1902px; top: 101px; width: 12px; height: 8px; }

/* main */
.main { height: 790px; display: flex; flex: none; }
.leftnav { width: 51px; background: #f3f2f1; border-right: 1px solid #e1dfdd; flex: none; }
.nav-ic { height: 50px; display: flex; align-items: center; justify-content: center; padding-right: 2px; }
.nav-ic .ic24 { width: 21px; height: 21px; }
.nav-ic.active { height: 49px; border-left: 3px solid #117865; padding-right: 4px; }
.dax { font: bold 7px "Noto Sans", sans-serif; fill: #8a8886; }
.center { width: 1335px; display: flex; flex-direction: column; flex: none; }
.canvas { height: 746px; background: #fff; padding-left: 11px; }
.report { position: relative; width: 1314px; height: 738px; border: 2px dotted #605e5c; border-top: 0; border-width: 0 2px 2px 2px; }

.card { position: absolute; background: #f1e6f3; border: 1px solid #605e5c; box-shadow: 6px 7px 8px rgba(0,0,0,.33); border-radius: 30px; }
.c-title { left: 24px; top: 9px; width: 574px; height: 161px; padding: 31px 0 0 21px; font: 44px/52px "Liberation Sans", Arial, sans-serif; letter-spacing: -.2px; color: #252423; white-space: nowrap; }
.c-art { left: 610px; top: 9px; width: 302px; height: 168px; padding-top: 20px; display: flex; align-items: center; justify-content: center; font: 56px Roboto, sans-serif; color: #252423; }
.c-kpi { left: 923px; top: 9px; width: 274px; height: 168px; text-align: center; padding-top: 50px; }
.kpi-v { font: 400 54px/64px Roboto, sans-serif; letter-spacing: 2px; text-indent: 4px; color: #252423; }
.kpi-l { font-size: 16px; line-height: 22px; color: #605e5c; letter-spacing: -0.2px; }
.c-next, .c-prev { left: 1220px; width: 79px; height: 76px; border-radius: 26px; display: flex; align-items: center; justify-content: center; }
.c-next { top: 9px; }
.c-prev { top: 110px; }
.arrow { width: 46px; height: 46px; }

.c-chart { left: 24px; top: 186px; width: 772px; height: 538px; }
.ch-title { padding: 10px 0 0 14px; height: 33px; font: 18px/22px Roboto, sans-serif; letter-spacing: .75px; color: #3b3a39; }
.ch-ytitle { position: absolute; left: 17px; top: 220px; height: 86px; writing-mode: vertical-rl; transform: rotate(180deg); font: bold 18px/20px "Noto Sans", sans-serif; color: #252423; text-align: center; }
.plot { position: relative; width: 645px; height: 436px; margin: 12px 0 0 163px; padding-top: 13px; }
.gl { position: absolute; top: 0; bottom: 0; width: 1px; background: repeating-linear-gradient(to bottom, rgba(50,45,60,.75) 0 2px, transparent 2px 8px); z-index: 2; }
.gl0 { left: 0; } .gl1 { left: 129px; } .gl2 { left: 258px; } .gl3 { left: 387px; } .gl4 { left: 516px; }
.row { position: relative; height: 45.5px; display: flex; align-items: center; }
.cat { position: absolute; right: 654px; font: bold 17px Roboto, sans-serif; color: #252423; white-space: nowrap; letter-spacing: -.1px; }
.bar { height: 36px; background: #7860a8; border: 1px solid #4b3580; display: flex; align-items: center; justify-content: flex-end; padding-right: 7px; }
.row em { font: normal 12px Roboto, sans-serif; color: #3b3a39; margin-left: 8px; position: relative; z-index: 3; }
.ticks { display: grid; grid-template-columns: repeat(5, 129px); margin-left: 98.500px; height: 24px; }
.ticks span { text-align: center; font: 14px/24px Roboto, sans-serif; color: #3b3a39; }
.ch-xtitle { width: 578px; margin-left: 163px; text-align: center; font: bold 17px/20px Roboto, sans-serif; color: #252423; }

.c-table { left: 813px; top: 187px; width: 434px; height: 537px; padding: 14px 0 0 15px; }
.tbl { width: 376px; table-layout: fixed; border-collapse: collapse; font-size: 26px; }
.tbl th { height: 66px; background: #53378e; color: #fff; font-weight: 400; font-size: 29px; text-align: left; vertical-align: top; padding: 3px 0 0 4px; border: 2px solid #3a2a6e; border-bottom-width: 4px; line-height: 38px; white-space: nowrap; position: relative; }
.tbl .th1 { width: 192px; padding-left: 5px; letter-spacing: -.2px; }
.sort { position: absolute; left: 6px; top: 47px; border: 10px solid transparent; border-top: 9px solid #fff; border-bottom: 0; }
.tbl td { height: 40px; padding: 1px 5px 0 4px; border: 2px solid #2f2a52; line-height: 34px; letter-spacing: -.45px; color: #252423; white-space: nowrap; }
.tbl tbody td:first-child { text-align: right; padding-right: 7px; }
.tbl tbody tr:nth-child(odd) td { background: #c8b6e4; }
.tbl tbody tr:nth-child(even) td { background: #aa91d9; }
.tbl tfoot td { height: 44px; background: #53378e; color: #fff; font-weight: 700; font-size: 31px; text-align: right; padding: 4px 7px 0 4px; border-color: #3a2a6e; }

/* tabs */
.tabs { height: 44px; background: #fff; display: flex; }
.tab-tools { width: 160px; background: #f3f2f1; display: flex; align-items: center; padding-left: 14px; position: relative; border-right: 1px solid #c8c6c4; }
.dev { width: 24px; margin-bottom: 8px; }
.dev-on::after { content: ""; position: absolute; left: 13px; top: 35px; width: 30px; height: 4px; background: #117865; border-radius: 2px; }
.phone { width: 14px; height: 26px; margin-left: 37px; margin-bottom: 8px; }
.tri { width: 6px; height: 10px; margin-left: 28px; margin-bottom: 4px; }
.tri2 { margin-left: 22px; }
.tab { width: 95.500px; display: flex; align-items: center; justify-content: center; border-right: 1px solid #c8c6c4; font-size: 14px; letter-spacing: -.3px; color: #252423; position: relative; padding-bottom: 2px; }
.tab.on { border-bottom: 5px solid #117865; padding-bottom: 0; color: #000; }
.tab b { position: absolute; right: 4px; top: -2px; font: 400 14px "Noto Sans", sans-serif; }
.addtab { width: 49px; height: 40px; margin: 2px 0 0 0; background: #117865; display: flex; align-items: center; justify-content: center; }
.plus { width: 14px; height: 14px; }

/* filters */
.filters { width: 41px; background: #fff; border-left: 1px solid #d2d0ce; border-right: 1px solid #d2d0ce; position: relative; padding-top: 16px; flex: none; }
.dblback { width: 16px; height: 14px; margin-left: 12px; }
.funnel { width: 16px; height: 16px; margin: 21px 0 0 15px; }
.f-txt { display: block; writing-mode: vertical-rl; font-size: 19px; font-weight: 500; margin: 8px 0 0 9px; line-height: 22px; letter-spacing: -.2px; }

/* panes */
.pane { width: 227px; background: #f3f2f1; border-right: 1px solid #e1dfdd; flex: none; font-size: 14px; color: #3b3a39; }
.p-head { height: 50px; display: flex; align-items: center; padding-left: 11px; }
.p-head h2 { margin: 0; font-size: 18px; font-weight: 600; width: 161px; color: #252423; white-space: nowrap; letter-spacing: .2px; }
.dots { width: 23px; font-size: 20px; font-weight: 400; letter-spacing: 1px; color: #3b3a39; line-height: 14px; }
.dbl { width: 16px; height: 14px; margin-left: 6px; }
.p-lbl { padding-left: 11px; line-height: 20px; letter-spacing: -.2px; }
.p-lbl1 { margin-top: -2px; }
.vt { margin: 4px 0 0 11px; width: 205px; height: 39px; background: #fff; border: 1px solid #8a8886; border-radius: 2px; display: flex; align-items: center; padding-left: 8px; gap: 9px; position: relative; }
.vti { width: 23px; height: 23px; }
.vt-sep { position: absolute; left: 170px; top: 4px; bottom: 4px; width: 1px; background: #8a8886; }
.vt-chev { position: absolute; left: 181px; top: 15px; width: 15px; height: 9px; color: #605e5c; }
.sugg { margin: 4px 0 0 11px; display: flex; align-items: center; gap: 11px; height: 20px; }
.toggle { width: 40px; height: 20px; border: 1px solid #8a8886; border-radius: 10px; background: #fff; display: flex; align-items: center; font-size: 11px; padding-left: 5px; gap: 3px; color: #605e5c; }
.toggle i { width: 10px; height: 10px; border-radius: 50%; background: #605e5c; }
.p-lbl2 { margin-top: 14px; }
.adddash { margin: 4px 0 0 11px; width: 205px; height: 48px; border: 1px dashed #605e5c; padding: 5px; }
.addbtn { height: 36px; background: #fff; border: 1px solid #605e5c; border-radius: 2px; text-align: center; line-height: 34px; font-weight: 500; color: #252423; }
.dsearch { margin: 7px 0 0 6px; width: 214px; height: 32px; border: 1px solid #8a8886; border-radius: 2px; display: flex; align-items: center; padding: 2px 0 0 10px; gap: 8px; font-size: 16px; color: #605e5c; }
.tree { list-style: none; margin: 12px 0 0 0; padding: 0; }
.tree li { height: 30px; display: flex; align-items: center; padding-left: 12px; color: #605e5c; white-space: nowrap; font-size: 14px; }
.tc { width: 8px; height: 14px; margin-right: 8px; }
.ti { width: 15px; height: 15px; margin-right: 9px; }
.rail { width: 40px; background: #fff; position: relative; flex: none; }
.r-btn { height: 40px; display: flex; align-items: center; justify-content: center; }
.r-sel { background: #e1dfdd; border: 1px solid #8a8886; }
.srec { position: absolute; left: 9px; top: 241px; width: 24px; height: 113px; background: #111; border-radius: 5px; color: #fff; display: flex; flex-direction: column; align-items: center; padding-top: 5px; }
.srec-dot { width: 12px; height: 12px; border-radius: 50%; background: #e0202a; outline: 1px solid #e0202a; outline-offset: 1px; flex: none; }
.srec span { writing-mode: vertical-rl; font: 20px/22px "Liberation Sans", sans-serif; margin-top: 5px; letter-spacing: -.4px; }

/* status */
.status { height: 29px; background: #f3f2f1; border-top: 1px solid #e1dfdd; font-size: 14px; line-height: 29px; padding-left: 5px; color: #484644; letter-spacing: -.2px; flex: none; }
.zoombar { position: absolute; left: 1415px; top: 993px; font-size: 14px; color: #484644; width: 45px; height: 22px; background: linear-gradient(#605e5c,#605e5c) 12px 12px / 33px 1px no-repeat; }

/* taskbar */
.taskbar { height: 51px; flex: 1; background: linear-gradient(90deg, #1d2226 0%, #1a2a35 45%, #1f2428 100%); display: flex; align-items: center; position: relative; color: #fff; }
.earn { width: 502px; display: flex; align-items: center; padding-left: 29px; }
.earn-ic { position: relative; width: 22px; height: 28px; background: #3aa0e8; border-radius: 3px; display: flex; align-items: flex-end; justify-content: center; padding-bottom: 2px; }
.earn-bars { width: 16px; height: 14px; }
.badge { position: absolute; left: 9px; top: -9px; width: 20px; height: 20px; border-radius: 50%; background: #f79ba5; color: #222; font: 400 13px/20px "Noto Sans", sans-serif; text-align: center; }
.earn-t { margin-left: 13px; font-size: 15px; line-height: 20px; letter-spacing: -.2px; }
.earn-s { color: #c8c6c4; font-size: 14px; }
.start { width: 30px; height: 30px; }
.tsearch { margin-left: 16px; width: 267px; height: 40px; background: #3a434a; border-radius: 20px; display: flex; align-items: center; padding-left: 15px; gap: 12px; font-size: 15px; color: #d2d0ce; position: relative; }
.ts-art { position: absolute; right: -6px; top: 6px; width: 60px; height: 36px; }
.apps { position: absolute; left: 826px; top: 0; height: 61px; display: flex; align-items: center; }
.app-i { width: 55px; height: 61px; display: flex; align-items: center; justify-content: center; position: relative; }
.ai { width: 30px; height: 30px; }
.chrome { width: 29px; height: 29px; border-radius: 50%; background: radial-gradient(circle, #4a8ef0 0 26%, #fff 27% 38%, transparent 39%), conic-gradient(from -60deg, #e33b2e 0 120deg, #fbc02d 120deg 240deg, #2fa44f 240deg 360deg); }
.zoomi { width: 30px; height: 42px; border-radius: 50% / 42%; background: #0b5cff; color: #dfe9ff; font: 9px/42px "Noto Sans", sans-serif; text-align: center; }
.hbadge { position: absolute; left: 28px; top: 7px; width: 20px; height: 20px; border-radius: 50%; background: #0f97a6; color: #cff; font: 700 11px/20px "Noto Sans", sans-serif; text-align: center; }
.app-dot::after { content: ""; position: absolute; left: 25px; bottom: 4px; width: 6px; height: 4px; background: #9a9a9a; border-radius: 1px; }
.app-on { width: 50px; height: 50px; margin-left: 2px; background: #2a3136; border-radius: 4px; }
.app-line { position: absolute; left: 15px; bottom: 2px; width: 20px; height: 4px; background: #4cc2ff; border-radius: 2px; }
.tray { position: absolute; left: 1596px; top: 0; height: 61px; display: flex; align-items: center; font-size: 15px; }
.lang { margin-left: 21px; width: 40px; text-align: center; line-height: 20px; letter-spacing: -.2px; }
.lang + svg { margin-left: 18px; }
.tray svg + svg { margin-left: 11px; }
.clock { width: 100px; text-align: right; line-height: 20px; letter-spacing: -.2px; white-space: nowrap; }
.bell { width: 14px; height: 18px; margin-left: 12px; }

/* toast */
.toast { position: absolute; left: 1460px; top: 795px; width: 460px; height: 224px; background: #fff; border: 2px solid #5a1ea6; border-radius: 10px; z-index: 10; padding: 0 23px; }
.t-head { height: 70px; margin-top: 11px; display: flex; align-items: center; position: relative; }
.t-logo { width: 28px; height: 28px; }
.t-name { margin-left: 5px; font: 300 36px/44px Inter, sans-serif; color: #111; }
.t-name b { color: #b52c25; font-weight: 700; }
.t-x { position: absolute; right: 0; top: 29px; width: 16px; height: 16px; }
.t-msg { margin: 17px 0 0 0; font: 16px/20px Inter, sans-serif; color: #86878c; width: 400px; }
```
